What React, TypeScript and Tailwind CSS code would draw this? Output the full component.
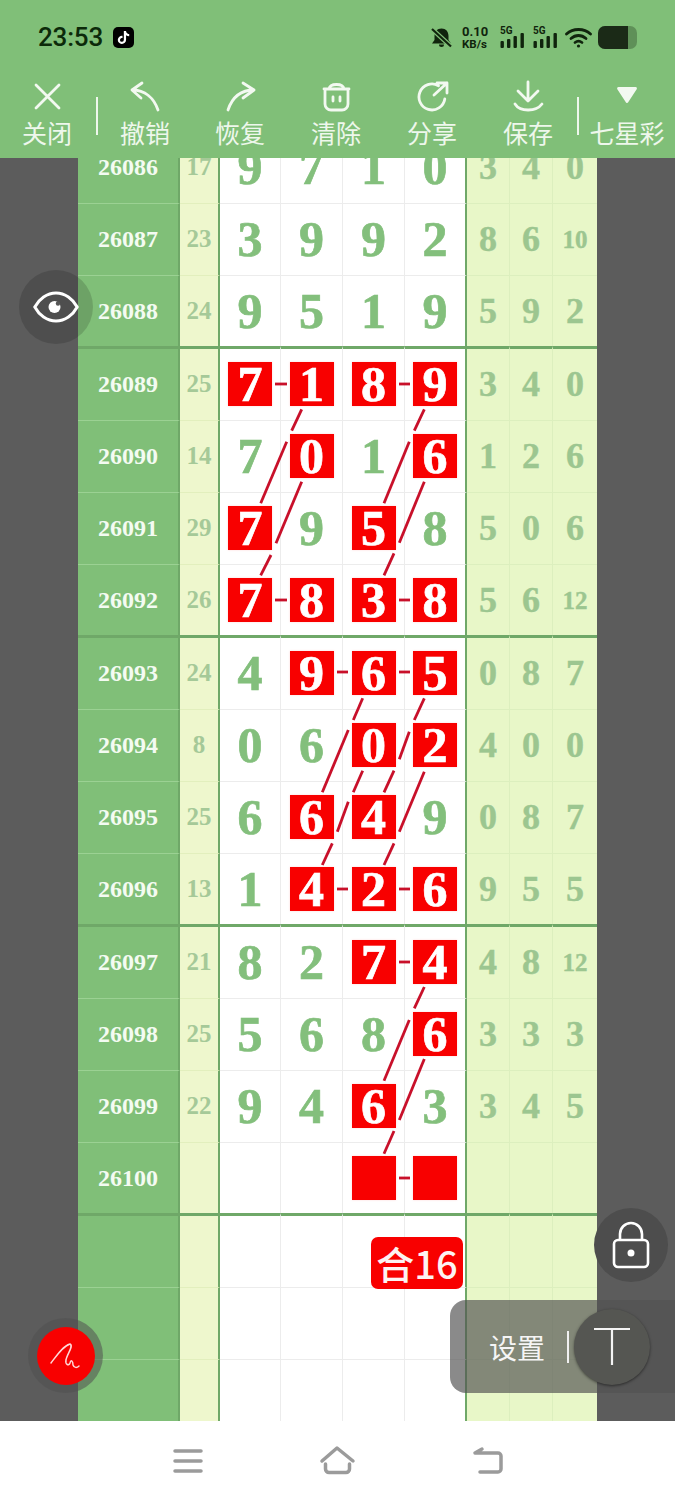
import { FaTiktok } from 'react-icons/fa';

type Row = { id: string; sum: string; digits: string[]; hits: number[]; right: string[] };

const rows: Row[] = [
  { id: '26086', sum: '17', digits: ['9', '7', '1', '0'], hits: [], right: ['3', '4', '0'] },
  { id: '26087', sum: '23', digits: ['3', '9', '9', '2'], hits: [], right: ['8', '6', '10'] },
  { id: '26088', sum: '24', digits: ['9', '5', '1', '9'], hits: [], right: ['5', '9', '2'] },
  { id: '26089', sum: '25', digits: ['7', '1', '8', '9'], hits: [0, 1, 2, 3], right: ['3', '4', '0'] },
  { id: '26090', sum: '14', digits: ['7', '0', '1', '6'], hits: [1, 3], right: ['1', '2', '6'] },
  { id: '26091', sum: '29', digits: ['7', '9', '5', '8'], hits: [0, 2], right: ['5', '0', '6'] },
  { id: '26092', sum: '26', digits: ['7', '8', '3', '8'], hits: [0, 1, 2, 3], right: ['5', '6', '12'] },
  { id: '26093', sum: '24', digits: ['4', '9', '6', '5'], hits: [1, 2, 3], right: ['0', '8', '7'] },
  { id: '26094', sum: '8', digits: ['0', '6', '0', '2'], hits: [2, 3], right: ['4', '0', '0'] },
  { id: '26095', sum: '25', digits: ['6', '6', '4', '9'], hits: [1, 2], right: ['0', '8', '7'] },
  { id: '26096', sum: '13', digits: ['1', '4', '2', '6'], hits: [1, 2, 3], right: ['9', '5', '5'] },
  { id: '26097', sum: '21', digits: ['8', '2', '7', '4'], hits: [2, 3], right: ['4', '8', '12'] },
  { id: '26098', sum: '25', digits: ['5', '6', '8', '6'], hits: [3], right: ['3', '3', '3'] },
  { id: '26099', sum: '22', digits: ['9', '4', '6', '3'], hits: [2], right: ['3', '4', '5'] },
  { id: '26100', sum: '', digits: ['', '', '', ''], hits: [2, 3], right: ['', '', ''] },
  { id: '', sum: '', digits: ['', '', '', ''], hits: [], right: ['', '', ''] },
  { id: '', sum: '', digits: ['', '', '', ''], hits: [], right: ['', '', ''] },
  { id: '', sum: '', digits: ['', '', '', ''], hits: [], right: ['', '', ''] },
];

// diagonal links between the red boxes, broken where they pass a digit
const links = [
  [301.7, 409.3, 291.7, 430.7], [286.7, 441.7, 260.7, 503.3],
  [301.7, 481.7, 276, 543.3], [271, 555, 260.7, 575.3],
  [424.3, 409.3, 414.3, 430.7], [409.3, 441.7, 384, 503.3],
  [424.3, 481.7, 399.3, 542.7], [394, 553.3, 384, 575.3],
  [362.7, 698.3, 353.3, 720], [348.3, 730, 322.3, 792.3],
  [424.3, 698.3, 414.3, 720], [409.3, 731.7, 399.3, 759.3], [394, 770.7, 384, 792.3],
  [362.7, 770.7, 353.3, 792.3], [348.3, 801.7, 337.3, 831.7], [332.3, 843.3, 322.3, 865],
  [424.3, 771.7, 399.3, 831.7], [394, 843.3, 384, 865],
  [424.3, 987, 414.3, 1008.3], [409.3, 1020, 384, 1080.7],
  [424.3, 1059, 399.3, 1120], [394, 1131, 384, 1153.7],
];

const dashes = [
  [275, 287, 384], [399, 410, 384],
  [275, 287, 600], [399, 410, 600],
  [337, 348, 672], [399, 410, 672],
  [337, 348, 889], [399, 410, 889],
  [399, 410, 962],
  [399, 410, 1178],
];

const serif = "font-['Liberation_Serif',serif] font-bold";
const cjk = "font-['Noto_Sans_CJK_SC',sans-serif]";

function rowHeight(index: number) {
  const pos = index % 4;
  if (pos === 3) return 'h-[74px]';
  if (pos === 2) return 'h-[71px]';
  return 'h-[72px]';
}

function TableRow({ row, index }: { row: Row; index: number }) {
  const thick = index % 4 === 3;
  const nudge = index % 4 === 2 ? '' : 'pb-[1px]';
  const top = (thin: string) => (thick ? 'border-t-[3px] border-t-[#6fa868]' : `border-t ${thin}`);

  return (
    <div className={`grid grid-cols-[102px_40px_61px_62px_62px_62px_43px_43px_44px] ${rowHeight(index)}`}>
      <div className={`flex items-center justify-center bg-[#80bf78] border-r-2 border-r-[#6fa868] text-[24px] text-[#f4fbf2] ${nudge} ${serif} ${top('border-t-[#9bd193]')}`}>
        {row.id}
      </div>
      <div className={`flex items-center justify-center bg-[#eef7cd] border-r-2 border-r-[#6fa868] text-[25px] text-[#a5c998] ${nudge} ${serif} ${top('border-t-[#e2efbd]')}`}>
        {row.sum}
      </div>
      {row.digits.map((digit, i) => (
        <div
          key={i}
          className={`flex items-center justify-center bg-white ${i === 3 ? 'border-r-2 border-r-[#6fa868]' : 'border-r border-r-[#ececec]'} ${nudge} ${serif} ${top('border-t-[#ececec]')}`}
        >
          {row.hits.includes(i) ? (
            <div className="flex h-[44px] w-[44px] items-center justify-center bg-[#f80000] text-[50px] leading-none text-white shadow-[0_0_2px_#ffd5d5] [-webkit-text-stroke:0.7px_white]">
              {digit}
            </div>
          ) : (
            <span className="text-[50px] leading-none text-[#83bf7c] [-webkit-text-stroke:0.7px_#83bf7c]">{digit}</span>
          )}
        </div>
      ))}
      {row.right.map((digit, i) => (
        <div
          key={i}
          className={`flex items-center justify-center bg-[#e8f7c8] ${i < 2 ? 'border-r border-r-[#dcefbe]' : ''} ${digit.length > 1 ? 'text-[25px]' : 'text-[36px]'} leading-none text-[#9cc690] [-webkit-text-stroke:0.4px_#9cc690] ${nudge} ${serif} ${top('border-t-[#dcefbe]')}`}
        >
          {digit}
        </div>
      ))}
    </div>
  );
}

function ToolItem({ label, width, children }: { label: string; width: string; children: React.ReactNode }) {
  return (
    <div className={`flex flex-col items-center ${width}`}>
      <svg width="36" height="36" viewBox="0 0 36 36" fill="none" stroke="#f3f9f1" strokeWidth="2.8" strokeLinecap="round" strokeLinejoin="round">
        {children}
      </svg>
      <span className={`whitespace-nowrap text-[25px] leading-[36px] text-[#eef7ec] ${cjk}`}>{label}</span>
    </div>
  );
}

function Signal() {
  return (
    <svg width="25" height="23" viewBox="0 0 25 23" fill="#10240d">
      <text x="0" y="7.500" fontSize="10" fontWeight="700" fontFamily="Roboto, sans-serif">5G</text>
      <rect x="0.500" y="15" width="3.400" height="7" rx="1" />
      <rect x="7" y="13" width="3.400" height="9" rx="1" />
      <rect x="13.500" y="10" width="3.400" height="12" rx="1" />
      <rect x="20.500" y="7" width="3.400" height="15" rx="1" />
    </svg>
  );
}

export default function App() {
  return (
    <div className="relative flex h-[1500px] w-[675px] flex-col overflow-hidden bg-white">
      <header className="z-10 h-[158px] shrink-0 bg-[#80bf78]">
        <div className="flex h-[78px] items-start pt-[22px] pl-[38px] pr-[38px]">
          <span className="text-[26px] leading-[30px] tracking-[-0.2px] text-[#0c2a0a] font-['Roboto',sans-serif] font-medium">23:53</span>
          <span className="ml-[10px] mt-[5px] flex h-[21px] w-[21px] items-center justify-center rounded-[5px] bg-black text-white">
            <FaTiktok size={13} />
          </span>
          <div className="ml-auto flex items-start">
            <svg className="mt-[6px]" width="21" height="20" viewBox="0 0 21 20" fill="#10240d">
              <path d="M10.500 0.500c-4.500 0-7 3-7 7.500v4l-2.500 3.500h19l-2.500-3.500V8c0-4.500-2.500-7.500-7-7.500zM8 16.500h5a2.500 2.500 0 0 1-5 0z" />
              <path d="M1 1l19 17.500" stroke="#80bf78" strokeWidth="4.500" />
              <path d="M1 1l19 17.500" stroke="#10240d" strokeWidth="2.200" />
            </svg>
            <div className="ml-[10px] mt-[3px] flex w-[28px] flex-col font-['Roboto',sans-serif] font-bold text-[#10240d]">
              <span className="text-[13px] leading-[13px]">0.10</span>
              <span className="text-[11.500px] leading-[12px] whitespace-nowrap">KB/s</span>
            </div>
            <div className="ml-[10px] mt-[4px]"><Signal /></div>
            <div className="ml-[8px] mt-[4px]"><Signal /></div>
            <svg className="ml-[7px] mt-[5px]" width="27" height="21" viewBox="0 0 27 21" fill="none" stroke="#10240d" strokeWidth="2.800" strokeLinecap="round">
              <path d="M1.500 7C8 1 19 1 25.500 7" />
              <path d="M6 11.500c4.500-4 10.500-4 15 0" />
              <path d="M10 15.500c2-1.500 5-1.500 7 0" />
              <circle cx="13.500" cy="19" r="1.600" fill="#10240d" stroke="none" />
            </svg>
            <div className="ml-[6px] mt-[4px] h-[23px] w-[39px] overflow-hidden rounded-[7px] bg-[#5f9058]">
              <div className="h-full w-[30px] bg-[#1b2a17]" />
            </div>
          </div>
        </div>
        <div className="flex h-[80px]">
          <ToolItem label="关闭" width="w-[94px]">
            <path d="M7 7l23 23M30 7L7 30" />
          </ToolItem>
          <div className="ml-[2px] mt-[19px] h-[38px] w-[2px] bg-[#eef7ec]" />
          <ToolItem label="撤销" width="w-[94px]">
            <path d="M15 5L5 12l9 8M5 12c13 0 22 8 26 20" />
          </ToolItem>
          <ToolItem label="恢复" width="w-[96px]">
            <path d="M21 5l11 7-11 8M32 12c-14 0-22 8-26 20" />
          </ToolItem>
          <ToolItem label="清除" width="w-[96px]">
            <path d="M6 11h25M11 11c1-6 14-6 15 0M7 11v15a6 6 0 0 0 6 6h11a6 6 0 0 0 6-6V11M15 19v4M22 19v4" />
          </ToolItem>
          <ToolItem label="分享" width="w-[96px]">
            <path d="M24.500 7.700A13 13 0 1 0 30.800 21M20 17L33 5M23 5h10v10" />
          </ToolItem>
          <ToolItem label="保存" width="w-[96px]">
            <path d="M18 4v18M8 13l10 10 10-10M5 26c5 8 21 8 27 0" />
          </ToolItem>
          <div className="ml-[1px] mt-[19px] h-[38px] w-[2px] bg-[#eef7ec]" />
          <ToolItem label="七星彩" width="w-[96px]">
            <path d="M9.500 10.500h17L18 23.500z" fill="#f3f9f1" />
          </ToolItem>
        </div>
      </header>

      <main className="h-[1263px] shrink-0 overflow-hidden bg-[#5c5c5c] pl-[78px]">
        <div className="-mt-[27px] w-[519px]">
          {rows.map((row, index) => (
            <TableRow key={index} row={row} index={index} />
          ))}
        </div>
      </main>

      <nav className="flex h-[79px] items-center bg-white">
        <svg width="675" height="79" viewBox="0 1421 675 79" fill="none" stroke="#9b9b9b" strokeWidth="3.500" strokeLinecap="round" strokeLinejoin="round">
          <path d="M175 1451h26M175 1461h26M175 1471h26" />
          <path d="M322 1461l15-13 16 13M325.500 1464v5a3.500 3.500 0 0 0 3.500 3.500h17a3.500 3.500 0 0 0 3.500-3.500v-5" />
          <path d="M475 1453l7-4M475 1453h23a3 3 0 0 1 3 3v13a3 3 0 0 1-3 3h-18" />
        </svg>
      </nav>

      {/* links drawn over the table */}
      <svg className="pointer-events-none absolute inset-0" width="675" height="1500" viewBox="0 0 675 1500" stroke="#c8102a" strokeWidth="2.800">
        {links.map(([x1, y1, x2, y2], i) => (
          <line key={i} x1={x1} y1={y1} x2={x2} y2={y2} />
        ))}
        {dashes.map(([x1, x2, y], i) => (
          <line key={i} x1={x1} y1={y} x2={x2} y2={y} />
        ))}
      </svg>

      <div className={`absolute left-[371px] top-[1237px] flex h-[52px] w-[92px] items-center justify-center rounded-[7px] bg-[#f80000] text-[38px] font-medium leading-none text-[#fdf2f2] ${cjk}`}>
        合16
      </div>

      <div className="absolute left-[19px] top-[270px] flex h-[74px] w-[74px] items-center justify-center rounded-full bg-black/15">
        <svg width="46" height="32" viewBox="0 0 46 32" fill="none" stroke="white" strokeWidth="3">
          <path d="M1.800 16C6 8 14 2 23 2s17 6 21.200 14C40 24 32 30 23 30S6 24 1.800 16z" />
          <circle cx="21.500" cy="16" r="6" fill="white" stroke="none" />
          <circle cx="25" cy="12.500" r="2.200" fill="#565656" stroke="none" />
        </svg>
      </div>

      <div className="absolute left-[594px] top-[1208px] flex h-[74px] w-[74px] items-center justify-center rounded-full bg-[#4d4d4d]">
        <svg width="38" height="48" viewBox="0 0 38 48" fill="none" stroke="white" strokeWidth="2.600">
          <rect x="2" y="19" width="34" height="27" rx="4" />
          <path d="M8 19v-6a11 11 0 0 1 22 0v6" />
          <circle cx="19" cy="32" r="3.500" fill="white" stroke="none" />
        </svg>
      </div>

      <div className="absolute left-[28px] top-[1318px] flex h-[75px] w-[75px] items-center justify-center rounded-full bg-[rgba(80,80,80,0.55)]">
        <div className="flex h-[58px] w-[58px] items-center justify-center rounded-full bg-[#f80000]">
          <svg width="36" height="36" viewBox="0 0 36 36" fill="none" stroke="#ffd8d8" strokeWidth="1.500" strokeLinecap="round" strokeLinejoin="round">
            <path d="M3 25C9 17 15 8 22 6c4 2-3 10-4 16-1 5 3 6 4 3 1-4 3-2 3 2 1 3 4 3 6 1" />
          </svg>
        </div>
      </div>

      <div className="absolute left-[450px] top-[1300px] flex h-[93px] w-[225px] items-center rounded-l-[16px] bg-[rgba(81,81,81,0.675)] pl-[39px]">
        <span className={`whitespace-nowrap text-[28px] text-[#f5f5f5] ${cjk}`}>设置</span>
        <div className="ml-[22px] h-[32px] w-[2px] bg-[#f0f0f0]" />
        <div className="ml-[5px] flex h-[76px] w-[76px] items-center justify-center rounded-full bg-[#555652] shadow-[0_1px_3px_rgba(0,0,0,0.5)]">
          <svg width="38" height="40" viewBox="0 0 38 40" fill="none" stroke="#f4f4f4" strokeWidth="2.200">
            <path d="M1 2h36M19 2v36" />
          </svg>
        </div>
      </div>
    </div>
  );
}
